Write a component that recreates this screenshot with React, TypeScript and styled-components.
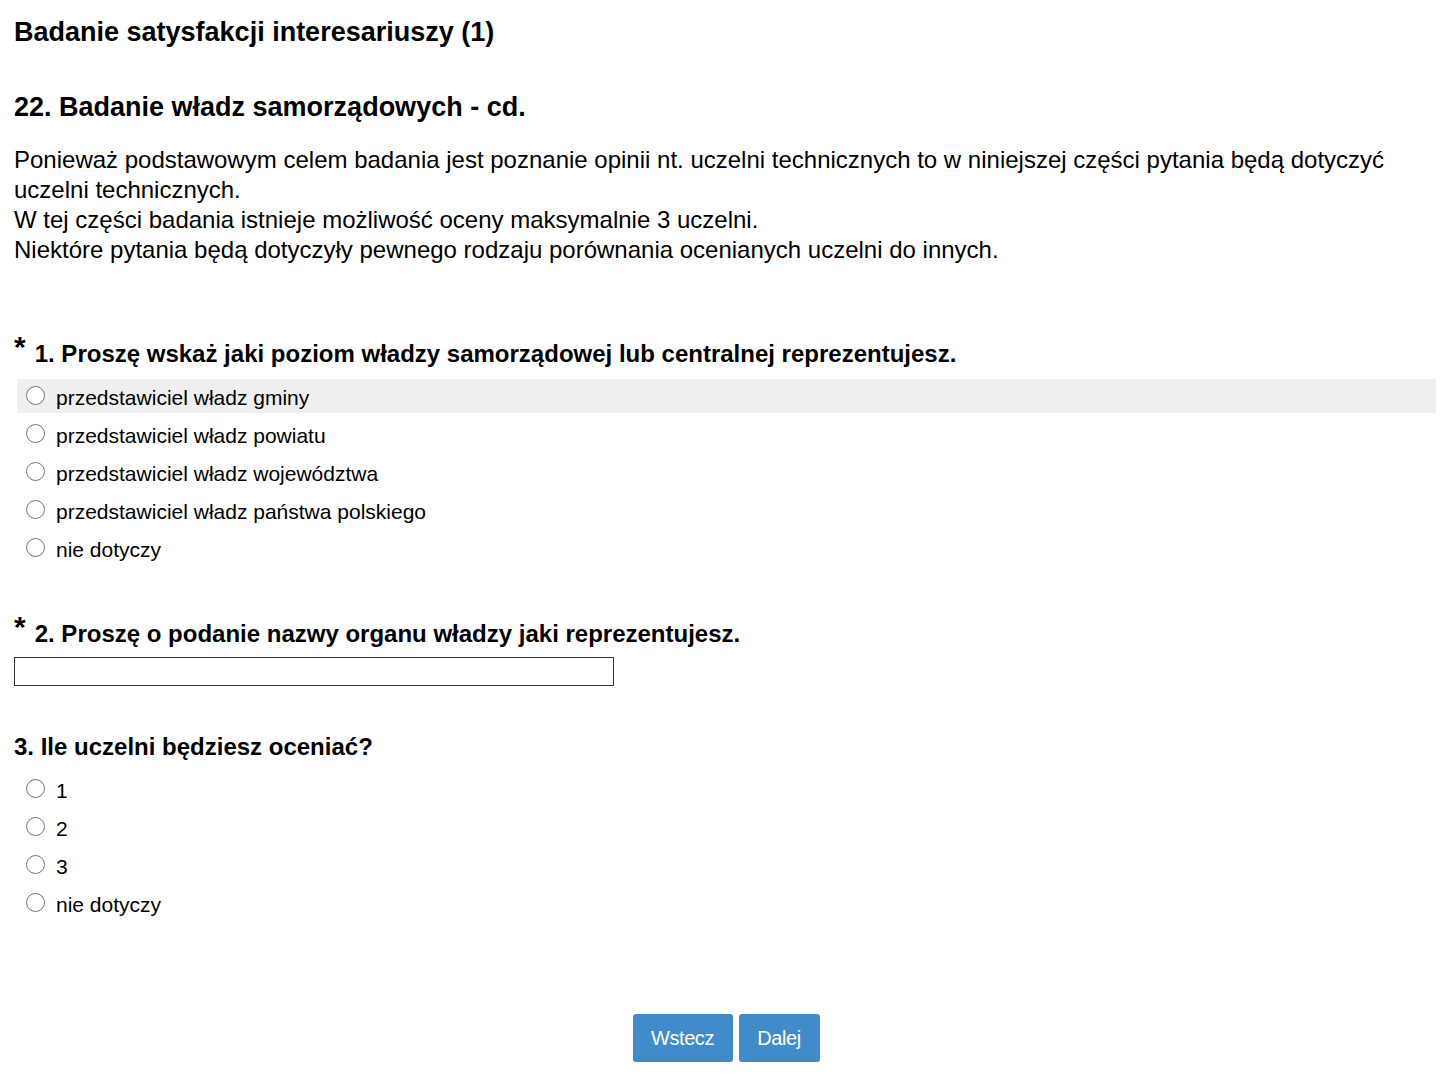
import React from "react";
import styled, { createGlobalStyle } from "styled-components";

const Global = createGlobalStyle`
  html, body { margin: 0; padding: 0; background: #fff; }
  body { font-family: "Liberation Sans", Arial, sans-serif; color: #000; }
`;

const Page = styled.div`
  padding: 14px 14px 12px 14px;
`;

const Title = styled.h1`
  font-size: 27px;
  font-weight: bold;
  margin: 2px 0 0 0;
  line-height: 32px;
`;

const Section = styled.h2`
  font-size: 27px;
  font-weight: bold;
  margin: 43px 0 0 0;
  line-height: 32px;
`;

const Intro = styled.div`
  font-size: 24px;
  line-height: 30px;
  margin-top: 22px;
`;

const Question = styled.div<{ $top: number }>`
  margin-top: ${(p) => p.$top}px;
`;

const QTitle = styled.div`
  font-size: 24px;
  font-weight: bold;
  line-height: 28px;
  display: flex;
  align-items: flex-start;
`;

const Star = styled.span`
  font-size: 30px;
  font-weight: bold;
  margin-right: 9px;
  position: relative;
  top: -7px;
`;

const Options = styled.div`
  margin-top: 11px;
  display: flex;
  flex-direction: column;
`;

const Option = styled.label<{ $hl?: boolean }>`
  display: flex;
  align-items: center;
  box-sizing: border-box;
  height: 34px;
  padding-top: 4px;
  margin-bottom: 4px;
  padding-left: 9px;
  margin-left: 3px;
  background: ${(p) => (p.$hl ? "#efefef" : "transparent")};
  font-size: 21px;
`;

const Radio = styled.span`
  width: 17px;
  height: 17px;
  border: 1px solid #767676;
  border-radius: 50%;
  background: #fff;
  margin-right: 11px;
  margin-top: -6px;
  flex: none;
`;

const TextBox = styled.input`
  display: block;
  margin-top: 9px;
  width: 600px;
  height: 29px;
  box-sizing: border-box;
  border: 1px solid #333;
  border-radius: 0;
  font-size: 18px;
  padding: 0 4px;
`;

const Buttons = styled.div`
  display: flex;
  justify-content: center;
  gap: 6px;
  margin-top: 90px;
  padding-left: 2px;
`;

const Btn = styled.button<{ $w: number }>`
  width: ${(p) => p.$w}px;
  height: 48px;
  background: #428bca;
  color: #fff;
  border: none;
  border-radius: 3px;
  font-family: "Liberation Sans", Arial, sans-serif;
  font-size: 20px;
  letter-spacing: -0.4px;
`;

const q1 = [
  "przedstawiciel władz gminy",
  "przedstawiciel władz powiatu",
  "przedstawiciel władz województwa",
  "przedstawiciel władz państwa polskiego",
  "nie dotyczy",
];
const q3 = ["1", "2", "3", "nie dotyczy"];

export default function App() {
  return (
    <Page>
      <Global />
      <Title>Badanie satysfakcji interesariuszy (1)</Title>
      <Section>22. Badanie władz samorządowych - cd.</Section>
      <Intro>
        Ponieważ podstawowym celem badania jest poznanie opinii nt. uczelni technicznych to w niniejszej części pytania będą dotyczyć uczelni technicznych.
        <br />W tej części badania istnieje możliwość oceny maksymalnie 3 uczelni.
        <br />Niektóre pytania będą dotyczyły pewnego rodzaju porównania ocenianych uczelni do innych.
      </Intro>

      <Question $top={75}>
        <QTitle>
          <Star>*</Star>1. Proszę wskaż jaki poziom władzy samorządowej lub centralnej reprezentujesz.
        </QTitle>
        <Options>
          {q1.map((o, i) => (
            <Option key={o} $hl={i === 0}>
              <Radio />
              {o}
            </Option>
          ))}
        </Options>
      </Question>

      <Question $top={51}>
        <QTitle>
          <Star>*</Star>2. Proszę o podanie nazwy organu władzy jaki reprezentujesz.
        </QTitle>
        <TextBox type="text" />
      </Question>

      <Question $top={47}>
        <QTitle>3. Ile uczelni będziesz oceniać?</QTitle>
        <Options>
          {q3.map((o) => (
            <Option key={o}>
              <Radio />
              {o}
            </Option>
          ))}
        </Options>
      </Question>

      <Buttons>
        <Btn $w={100}>Wstecz</Btn>
        <Btn $w={81}>Dalej</Btn>
      </Buttons>
    </Page>
  );
}
